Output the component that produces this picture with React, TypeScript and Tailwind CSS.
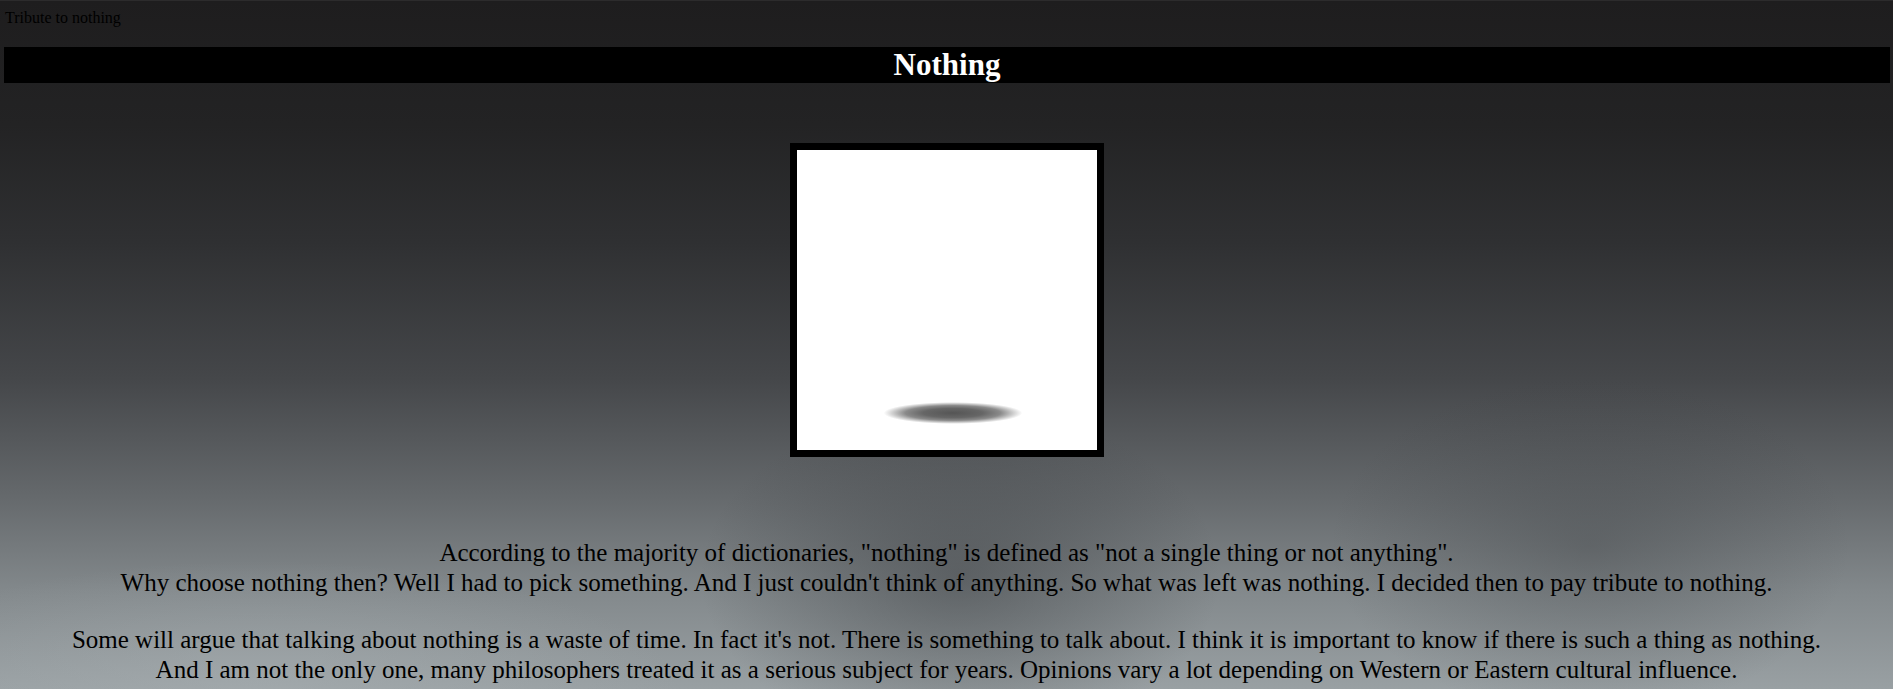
export default function App() {
  return (
    <div className="min-h-screen w-full overflow-hidden border-t border-[#2c2b2c] bg-[radial-gradient(ellipse_260px_170px_at_960px_575px,rgba(58,61,64,0.5),transparent),radial-gradient(ellipse_260px_170px_at_1590px_545px,rgba(58,61,64,0.35),transparent),radial-gradient(ellipse_420px_130px_at_260px_690px,rgba(168,175,178,0.55),transparent),linear-gradient(180deg,#1e1d1e_0%,#232324_18%,#2f3032_35%,#45474a_55%,#65696c_72%,#83898c_86%,#99a0a3_100%)] font-['Liberation_Serif',serif] text-black">
      <p className="pl-[5px] pt-[8px] text-[16px] leading-[18px]">Tribute to nothing</p>

      <h1 className="ml-[4px] mr-[3px] mt-[20px] bg-black text-center text-[31px] font-bold leading-[36px] text-white">
        Nothing
      </h1>

      <div className="mx-auto mt-[60px] flex h-[314px] w-[314px] flex-col items-center justify-end border-[7px] border-black bg-white pb-[26px] pl-[12px]">
        <div className="h-[22px] w-[140px] rounded-full bg-[radial-gradient(ellipse_at_center,#555_0%,#666_30%,#8a8a8a_48%,rgba(255,255,255,0)_70%)]" />
      </div>

      <div className="mt-[81px] text-center text-[25px] leading-[30px]">
        <p>
          According to the majority of dictionaries, "nothing" is defined as "not a single thing or not anything".
          <br />
          Why choose nothing then? Well I had to pick something. And I just couldn't think of anything. So what was left was nothing. I decided then to pay tribute to nothing.
        </p>
        <p className="mt-[27px]">
          Some will argue that talking about nothing is a waste of time. In fact it's not. There is something to talk about. I think it is important to know if there is such a thing as nothing.
          <br />
          And I am not the only one, many philosophers treated it as a serious subject for years. Opinions vary a lot depending on Western or Eastern cultural influence.
        </p>
      </div>
    </div>
  );
}
